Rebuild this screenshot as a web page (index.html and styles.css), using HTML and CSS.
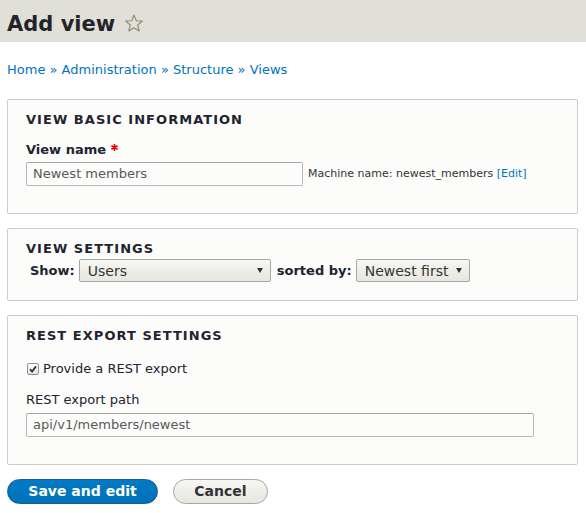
FILE: index.html
```html
<!DOCTYPE html>
<html>
<head>
<meta charset="utf-8">
<link rel="stylesheet" href="styles.css">
</head>
<body>
<header class="page-header">
  <h1 class="page-title">Add view<svg class="star" width="18" height="18" viewBox="0 0 18 18"><polygon points="9,1 11.3,6.7 17.4,7.1 12.7,11 14.2,17 9,13.7 3.8,17 5.3,11 0.6,7.1 6.7,6.7" fill="none" stroke="#8a8a7c" stroke-width="1.1" stroke-linejoin="round"/></svg></h1>
</header>
<nav class="breadcrumb">
  <a href="#">Home</a><span class="sep"> » </span><a href="#">Administration</a><span class="sep"> » </span><a href="#">Structure</a><span class="sep"> » </span><a href="#">Views</a>
</nav>
<main class="content">
  <section class="fieldset fs-basic">
    <div class="legend">View basic information</div>
    <div class="label-bold">View name<svg class="req" width="7" height="7" viewBox="0 0 7 7"><path d="M3.5 0v7M0.4 1.7l6.2 3.6M0.4 5.3l6.2-3.6" stroke="#e00" stroke-width="1.6"/></svg></div>
    <div class="input-row">
      <div class="text-input short">Newest members</div>
      <span class="machine">Machine name: newest_members <a href="#">[Edit]</a></span>
    </div>
  </section>
  <section class="fieldset fs-settings">
    <div class="legend">View settings</div>
    <div class="show-row">
      <span class="inline-label">Show:</span>
      <div class="select select-wide"><span class="select-text">Users</span><svg class="arrow" width="6" height="5" viewBox="0 0 6 5"><path d="M0 0h6L3 5z" fill="#333"/></svg></div>
      <span class="inline-label">sorted by:</span>
      <div class="select select-narrow"><span class="select-text">Newest first</span><svg class="arrow" width="6" height="5" viewBox="0 0 6 5"><path d="M0 0h6L3 5z" fill="#333"/></svg></div>
    </div>
  </section>
  <section class="fieldset fs-rest">
    <div class="legend">REST export settings</div>
    <div class="check-row">
      <span class="checkbox"><svg width="10" height="10" viewBox="0 0 10 10"><path d="M2 5.2l2.1 2.3L8 2.4" fill="none" stroke="#333" stroke-width="1.8"/></svg></span>
      <span>Provide a REST export</span>
    </div>
    <div class="label-plain">REST export path</div>
    <div class="text-input long">api/v1/members/newest</div>
  </section>
  <div class="actions">
    <button class="button primary">Save and edit</button>
    <button class="button">Cancel</button>
  </div>
</main>
</body>
</html>
```
FILE: styles.css
```css
html, body {
  margin: 0;
  padding: 0;
  background: #ffffff;
}
body {
  font-family: "DejaVu Sans", Verdana, sans-serif;
  font-size: 13px;
  line-height: 20px;
  color: #222330;
}
a {
  color: #0074bd;
  text-decoration: none;
}
.page-header {
  background: #e0e0d8;
  height: 42px;
  box-sizing: border-box;
  padding: 12px 7px 0;
}
.page-title {
  margin: 0;
  font-size: 21px;
  line-height: 24px;
  font-weight: bold;
  color: #232429;
}
.star {
  display: inline-block;
  margin-left: 10px;
  vertical-align: -1px;
}
.breadcrumb {
  margin: 18px 7px 0;
  line-height: 20px;
}
.breadcrumb .sep {
  color: #0074bd;
}
.content {
  margin: 19px 8px 0 7px;
}
.fieldset {
  background: #fcfcfa;
  border: 1px solid #cccccc;
  border-radius: 2px;
  padding: 10px 18px 27px;
  margin-bottom: 14px;
}
.fs-settings {
  padding-bottom: 18px;
}
.legend {
  font-weight: bold;
  text-transform: uppercase;
  letter-spacing: 0.08em;
  line-height: 20px;
}
.label-bold {
  font-weight: bold;
  margin-top: 10px;
}
.req {
  display: inline-block;
  margin-left: 5px;
  vertical-align: 3px;
}
.input-row {
  display: flex;
  align-items: center;
  margin-top: 2px;
}
.text-input {
  box-sizing: border-box;
  height: 24px;
  border: 1px solid #b8b8b8;
  border-top-color: #a8a8a8;
  border-radius: 2px;
  background: #fcfcfa;
  color: #595959;
  padding: 0 6px;
  line-height: 22px;
  font-size: 13px;
}
.text-input.short {
  width: 277px;
}
.text-input.long {
  width: 508px;
  margin-top: 3px;
}
.machine {
  font-size: 11px;
  line-height: 14px;
  color: #333333;
  margin-left: 5px;
}
.show-row {
  display: flex;
  align-items: center;
  padding-left: 4px;
}
.inline-label {
  font-weight: bold;
  margin-right: 4px;
}
.select {
  box-sizing: border-box;
  display: flex;
  align-items: center;
  height: 23px;
  border: 1px solid #a6a6a6;
  border-radius: 2px;
  background: linear-gradient(#f6f6f3, #e7e7df);
  color: #333333;
  font-size: 14px;
  padding: 0 7px 0 8px;
}
.select-wide {
  width: 192px;
  margin-right: 6px;
}
.select-narrow {
  width: 114px;
}
.select .select-text {
  flex: 1;
  white-space: nowrap;
}
.select .arrow {
  margin-left: 6px;
  flex: none;
}
.check-row {
  display: flex;
  align-items: center;
  margin-top: 13px;
  height: 20px;
}
.checkbox {
  box-sizing: border-box;
  width: 12px;
  height: 12px;
  margin-left: 1px;
  margin-right: 4px;
  border: 1px solid #8f8f8f;
  border-radius: 2px;
  background: linear-gradient(#ffffff, #e6e6e6);
  display: flex;
  align-items: center;
  justify-content: center;
}
.label-plain {
  margin-top: 11px;
}
.actions {
  display: flex;
  gap: 15px;
}
.button {
  box-sizing: border-box;
  height: 25px;
  font-family: "DejaVu Sans", Verdana, sans-serif;
  font-size: 14px;
  font-weight: bold;
  line-height: 23px;
  padding: 0 20.3px;
  border-radius: 20em;
  border: 1px solid #a6a6a6;
  background: linear-gradient(#f6f6f3, #e7e7df);
  color: #333333;
  cursor: pointer;
}
.button.primary {
  background: linear-gradient(#007bc6, #0071b8);
  border-color: #1e5c90;
  color: #ffffff;
}
```
